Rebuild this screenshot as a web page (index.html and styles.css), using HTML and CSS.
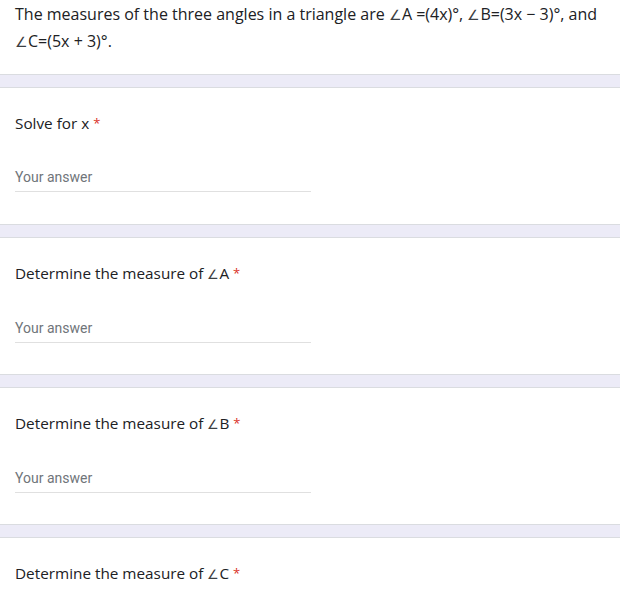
FILE: index.html
```html
<!DOCTYPE html>
<html>
<head>
<meta charset="utf-8">
<link rel="stylesheet" href="styles.css">
</head>
<body>
<div class="intro">The measures of the three angles in a triangle are <span class="ang">∠</span>A =(4x)°, <span class="ang">∠</span>B=(3x − 3)°, and <span class="ang">∠</span>C=(5x + 3)°.</div>
<div class="band"></div>
<div class="card">
  <div class="q">Solve for x <span class="req">*</span></div>
  <div class="answer">Your answer</div>
</div>
<div class="band"></div>
<div class="card">
  <div class="q">Determine the measure of <span class="ang">∠</span>A <span class="req">*</span></div>
  <div class="answer">Your answer</div>
</div>
<div class="band"></div>
<div class="card">
  <div class="q">Determine the measure of <span class="ang">∠</span>B <span class="req">*</span></div>
  <div class="answer">Your answer</div>
</div>
<div class="band"></div>
<div class="card">
  <div class="q">Determine the measure of <span class="ang">∠</span>C <span class="req">*</span></div>
</div>
</body>
</html>
```
FILE: styles.css
```css
html, body {
  margin: 0;
  padding: 0;
  background: #ffffff;
}
body {
  font-family: "Open Sans", "DejaVu Sans", sans-serif;
  color: #202124;
  overflow: hidden;
}
.intro {
  padding: 1px 15px 0 15px;
  height: 74px;
  box-sizing: border-box;
  font-size: 16px;
  line-height: 26px;
}
.ang {
  font-size: 0.85em;
  font-weight: 300;
  color: #3c4043;
}
.band {
  height: 12px;
  background: #ecebf7;
  border-top: 1px solid #dadce0;
  border-bottom: 1px solid #dadce0;
}
.card {
  height: 136px;
  padding: 0 15px;
  box-sizing: border-box;
  display: flex;
  flex-direction: column;
}
.q {
  margin-top: 24px;
  font-size: 15.3px;
  line-height: 22px;
}
.req {
  color: #d93025;
  font-size: 13px;
  vertical-align: top;
}
.answer {
  margin-top: 33px;
  width: 296px;
  font-family: Roboto, "Liberation Sans", sans-serif;
  font-size: 14px;
  line-height: 20px;
  color: #70757a;
  padding-bottom: 4px;
  border-bottom: 1px solid #e0e0e0;
}
```
